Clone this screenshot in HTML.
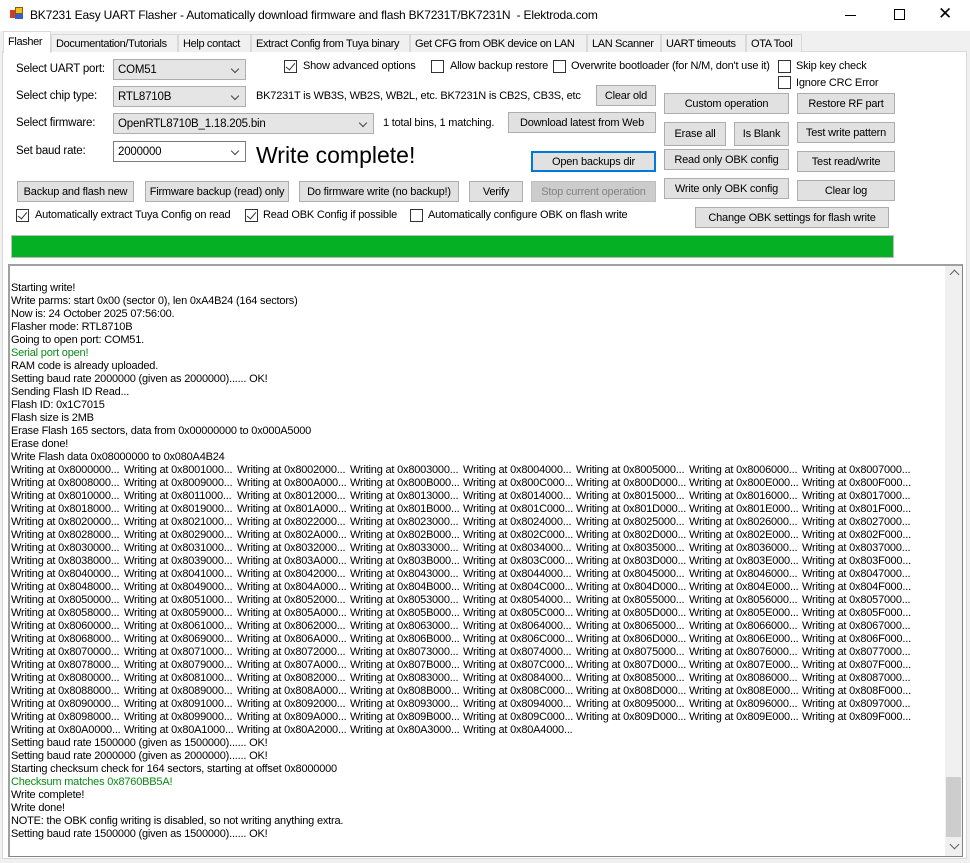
<!DOCTYPE html>
<html><head><meta charset="utf-8"><style>
*{box-sizing:border-box;margin:0;padding:0}
body{width:970px;height:863px;background:#f0f0f0;font-family:"Liberation Sans",sans-serif;font-size:11px;color:#000;position:relative;overflow:hidden;letter-spacing:-0.2px}
.a{position:absolute;white-space:nowrap}
.btn{position:absolute;background:#e1e1e1;border:1px solid #adadad;text-align:center;font-size:11px;display:flex;align-items:center;justify-content:center;white-space:nowrap}
.cb{position:absolute;width:13px;height:13px;border:1px solid #333;background:#fff}
.cb.on::after{content:"";position:absolute;left:3px;top:0px;width:4px;height:8px;border:solid #333;border-width:0 1.3px 1.3px 0;transform:rotate(40deg)}
.combo{position:absolute;background:#e5e5e5;border:1px solid #adadad;padding-left:4px;display:flex;align-items:center;font-size:11.5px}
.combo::after{content:"";position:absolute;right:7px;top:6px;width:5px;height:5px;border:solid #444;border-width:0 1px 1px 0;transform:rotate(45deg)}
.tab{position:absolute;top:34px;height:18px;border:1px solid #d9d9d9;border-bottom:none;background:#f0f0f0;padding:3px 0 0 4px;font-size:11px;white-space:nowrap;overflow:hidden;letter-spacing:-0.35px}
#log{position:absolute;left:8px;top:264px;width:955px;height:593px;background:#fff;border:1px solid #828282;border-top:2px solid #a0a0a0;border-left:2px solid #a0a0a0;overflow:hidden}
#lines{position:absolute;left:1px;top:16px;font-size:11px;line-height:13px;width:935px;overflow:hidden}
#lines div{height:13px;white-space:nowrap}
.r span{display:inline-block;width:113px;overflow:hidden;white-space:nowrap}
.g{color:#0a8a16}
.lb{font-size:11.5px}
</style></head><body>
<div class="a" style="left:0;top:0;width:970px;height:31px;background:#fff"></div>
<div class="a" style="left:10px;top:10px;width:6px;height:8px;background:#d04020"></div>
<div class="a" style="left:15px;top:7px;width:8px;height:7px;background:#f0c020;border:1px solid #806010"></div>
<div class="a" style="left:15px;top:14px;width:8px;height:5px;background:#3060d0"></div>
<div class="a" style="left:30px;top:8px;font-size:12px">BK7231 Easy UART Flasher - Automatically download firmware and flash BK7231T/BK7231N&nbsp; - Elektroda.com</div>
<div class="a" style="left:845px;top:15px;width:11px;height:1px;background:#000"></div>
<div class="a" style="left:894px;top:9px;width:11px;height:11px;border:1px solid #000"></div>
<div class="a" style="left:938px;top:4px;font-size:17px;font-weight:300">✕</div>

<div class="a" style="left:2px;top:51px;width:965px;height:808px;background:#fff;border:1px solid #d9d9d9"></div>
<div class="tab" style="left:51px;width:127px">Documentation/Tutorials</div>
<div class="tab" style="left:178px;width:73px">Help contact</div>
<div class="tab" style="left:251px;width:159px">Extract Config from Tuya binary</div>
<div class="tab" style="left:410px;width:177px">Get CFG from OBK device on LAN</div>
<div class="tab" style="left:587px;width:74px">LAN Scanner</div>
<div class="tab" style="left:661px;width:85px">UART timeouts</div>
<div class="tab" style="left:746px;width:56px">OTA Tool</div>
<div class="tab" style="left:3px;top:31px;height:22px;width:48px;background:#fff;padding-top:4px">Flasher</div>

<div class="a lb" style="left:16px;top:63px">Select UART port:</div>
<div class="combo" style="left:113px;top:59px;width:133px;height:21px">COM51</div>
<div class="a lb" style="left:16px;top:90px">Select chip type:</div>
<div class="combo" style="left:113px;top:86px;width:133px;height:21px">RTL8710B</div>
<div class="a lb" style="left:16px;top:117px">Select firmware:</div>
<div class="combo" style="left:113px;top:113px;width:261px;height:21px">OpenRTL8710B_1.18.205.bin</div>
<div class="a lb" style="left:16px;top:145px">Set baud rate:</div>
<div class="combo" style="left:113px;top:141px;width:133px;height:21px;background:#fff;border-color:#7a7a7a">2000000</div>
<div class="a" style="left:256px;top:142px;font-size:23px;letter-spacing:0">Write complete!</div>

<div class="cb on" style="left:284px;top:60px"></div><div class="a" style="left:303px;top:60px;line-height:13px">Show advanced options</div>
<div class="cb" style="left:431px;top:60px"></div><div class="a" style="left:450px;top:60px;line-height:13px">Allow backup restore</div>
<div class="cb" style="left:553px;top:60px"></div><div class="a" style="left:571px;top:60px;line-height:13px">Overwrite bootloader (for N/M, don't use it)</div>
<div class="cb" style="left:778px;top:60px"></div><div class="a" style="left:796px;top:60px;line-height:13px">Skip key check</div>
<div class="cb" style="left:778px;top:76px"></div><div class="a" style="left:796px;top:77px">Ignore CRC Error</div>

<div class="a" style="left:256px;top:90px;font-size:11px">BK7231T is WB3S, WB2S, WB2L, etc. BK7231N is CB2S, CB3S, etc</div>
<div class="btn" style="left:596px;top:85px;width:60px;height:21px">Clear old</div>
<div class="a" style="left:383px;top:117px">1 total bins, 1 matching.</div>
<div class="btn" style="left:508px;top:112px;width:148px;height:21px">Download latest from Web</div>
<div class="btn" style="left:531px;top:151px;width:125px;height:21px;border:2px solid #0078d7">Open backups dir</div>
<div class="btn" style="left:531px;top:181px;width:125px;height:21px;background:#ccc;border-color:#bfbfbf;color:#838383">Stop current operation</div>

<div class="btn" style="left:17px;top:181px;width:117px;height:21px">Backup and flash new</div>
<div class="btn" style="left:145px;top:181px;width:144px;height:21px">Firmware backup (read) only</div>
<div class="btn" style="left:299px;top:181px;width:160px;height:21px">Do firmware write (no backup!)</div>
<div class="btn" style="left:469px;top:181px;width:54px;height:21px">Verify</div>

<div class="btn" style="left:664px;top:93px;width:125px;height:21px">Custom operation</div>
<div class="btn" style="left:664px;top:122px;width:62px;height:24px">Erase all</div>
<div class="btn" style="left:734px;top:122px;width:55px;height:24px">Is Blank</div>
<div class="btn" style="left:664px;top:149px;width:125px;height:21px">Read only OBK config</div>
<div class="btn" style="left:664px;top:178px;width:125px;height:21px">Write only OBK config</div>
<div class="btn" style="left:797px;top:93px;width:98px;height:21px">Restore RF part</div>
<div class="btn" style="left:797px;top:122px;width:98px;height:21px">Test write pattern</div>
<div class="btn" style="left:797px;top:151px;width:98px;height:21px">Test read/write</div>
<div class="btn" style="left:797px;top:180px;width:98px;height:21px">Clear log</div>
<div class="btn" style="left:695px;top:207px;width:194px;height:21px">Change OBK settings for flash write</div>

<div class="cb on" style="left:16px;top:209px"></div><div class="a" style="left:35px;top:209px">Automatically extract Tuya Config on read</div>
<div class="cb on" style="left:245px;top:209px"></div><div class="a" style="left:263px;top:209px">Read OBK Config if possible</div>
<div class="cb" style="left:410px;top:209px"></div><div class="a" style="left:428px;top:209px">Automatically configure OBK on flash write</div>

<div class="a" style="left:11px;top:235px;width:883px;height:23px;background:#06b025;border:1px solid #bcbcbc"></div>

<div id="log">
<div class="a" style="right:0;top:0;width:17px;height:591px;background:#f0f0f0"></div>
<div class="a" style="right:4px;top:5px;width:7px;height:7px;border:solid #606060;border-width:1.5px 0 0 1.5px;transform:rotate(45deg)"></div>
<div class="a" style="right:1px;top:511px;width:15px;height:60px;background:#cdcdcd"></div>
<div class="a" style="right:4px;top:575px;width:7px;height:7px;border:solid #606060;border-width:0 1.5px 1.5px 0;transform:rotate(45deg)"></div>
<div id="lines">
<div>Starting write!</div>
<div>Write parms: start 0x00 (sector 0), len 0xA4B24 (164 sectors)</div>
<div>Now is: 24 October 2025 07:56:00.</div>
<div>Flasher mode: RTL8710B</div>
<div>Going to open port: COM51.</div>
<div class="g">Serial port open!</div>
<div>RAM code is already uploaded.</div>
<div>Setting baud rate 2000000 (given as 2000000)...... OK!</div>
<div>Sending Flash ID Read...</div>
<div>Flash ID: 0x1C7015</div>
<div>Flash size is 2MB</div>
<div>Erase Flash 165 sectors, data from 0x00000000 to 0x000A5000</div>
<div>Erase done!</div>
<div>Write Flash data 0x08000000 to 0x080A4B24</div>
<div class="r"><span>Writing at 0x8000000...</span><span>Writing at 0x8001000...</span><span>Writing at 0x8002000...</span><span>Writing at 0x8003000...</span><span>Writing at 0x8004000...</span><span>Writing at 0x8005000...</span><span>Writing at 0x8006000...</span><span>Writing at 0x8007000...</span></div>
<div class="r"><span>Writing at 0x8008000...</span><span>Writing at 0x8009000...</span><span>Writing at 0x800A000...</span><span>Writing at 0x800B000...</span><span>Writing at 0x800C000...</span><span>Writing at 0x800D000...</span><span>Writing at 0x800E000...</span><span>Writing at 0x800F000...</span></div>
<div class="r"><span>Writing at 0x8010000...</span><span>Writing at 0x8011000...</span><span>Writing at 0x8012000...</span><span>Writing at 0x8013000...</span><span>Writing at 0x8014000...</span><span>Writing at 0x8015000...</span><span>Writing at 0x8016000...</span><span>Writing at 0x8017000...</span></div>
<div class="r"><span>Writing at 0x8018000...</span><span>Writing at 0x8019000...</span><span>Writing at 0x801A000...</span><span>Writing at 0x801B000...</span><span>Writing at 0x801C000...</span><span>Writing at 0x801D000...</span><span>Writing at 0x801E000...</span><span>Writing at 0x801F000...</span></div>
<div class="r"><span>Writing at 0x8020000...</span><span>Writing at 0x8021000...</span><span>Writing at 0x8022000...</span><span>Writing at 0x8023000...</span><span>Writing at 0x8024000...</span><span>Writing at 0x8025000...</span><span>Writing at 0x8026000...</span><span>Writing at 0x8027000...</span></div>
<div class="r"><span>Writing at 0x8028000...</span><span>Writing at 0x8029000...</span><span>Writing at 0x802A000...</span><span>Writing at 0x802B000...</span><span>Writing at 0x802C000...</span><span>Writing at 0x802D000...</span><span>Writing at 0x802E000...</span><span>Writing at 0x802F000...</span></div>
<div class="r"><span>Writing at 0x8030000...</span><span>Writing at 0x8031000...</span><span>Writing at 0x8032000...</span><span>Writing at 0x8033000...</span><span>Writing at 0x8034000...</span><span>Writing at 0x8035000...</span><span>Writing at 0x8036000...</span><span>Writing at 0x8037000...</span></div>
<div class="r"><span>Writing at 0x8038000...</span><span>Writing at 0x8039000...</span><span>Writing at 0x803A000...</span><span>Writing at 0x803B000...</span><span>Writing at 0x803C000...</span><span>Writing at 0x803D000...</span><span>Writing at 0x803E000...</span><span>Writing at 0x803F000...</span></div>
<div class="r"><span>Writing at 0x8040000...</span><span>Writing at 0x8041000...</span><span>Writing at 0x8042000...</span><span>Writing at 0x8043000...</span><span>Writing at 0x8044000...</span><span>Writing at 0x8045000...</span><span>Writing at 0x8046000...</span><span>Writing at 0x8047000...</span></div>
<div class="r"><span>Writing at 0x8048000...</span><span>Writing at 0x8049000...</span><span>Writing at 0x804A000...</span><span>Writing at 0x804B000...</span><span>Writing at 0x804C000...</span><span>Writing at 0x804D000...</span><span>Writing at 0x804E000...</span><span>Writing at 0x804F000...</span></div>
<div class="r"><span>Writing at 0x8050000...</span><span>Writing at 0x8051000...</span><span>Writing at 0x8052000...</span><span>Writing at 0x8053000...</span><span>Writing at 0x8054000...</span><span>Writing at 0x8055000...</span><span>Writing at 0x8056000...</span><span>Writing at 0x8057000...</span></div>
<div class="r"><span>Writing at 0x8058000...</span><span>Writing at 0x8059000...</span><span>Writing at 0x805A000...</span><span>Writing at 0x805B000...</span><span>Writing at 0x805C000...</span><span>Writing at 0x805D000...</span><span>Writing at 0x805E000...</span><span>Writing at 0x805F000...</span></div>
<div class="r"><span>Writing at 0x8060000...</span><span>Writing at 0x8061000...</span><span>Writing at 0x8062000...</span><span>Writing at 0x8063000...</span><span>Writing at 0x8064000...</span><span>Writing at 0x8065000...</span><span>Writing at 0x8066000...</span><span>Writing at 0x8067000...</span></div>
<div class="r"><span>Writing at 0x8068000...</span><span>Writing at 0x8069000...</span><span>Writing at 0x806A000...</span><span>Writing at 0x806B000...</span><span>Writing at 0x806C000...</span><span>Writing at 0x806D000...</span><span>Writing at 0x806E000...</span><span>Writing at 0x806F000...</span></div>
<div class="r"><span>Writing at 0x8070000...</span><span>Writing at 0x8071000...</span><span>Writing at 0x8072000...</span><span>Writing at 0x8073000...</span><span>Writing at 0x8074000...</span><span>Writing at 0x8075000...</span><span>Writing at 0x8076000...</span><span>Writing at 0x8077000...</span></div>
<div class="r"><span>Writing at 0x8078000...</span><span>Writing at 0x8079000...</span><span>Writing at 0x807A000...</span><span>Writing at 0x807B000...</span><span>Writing at 0x807C000...</span><span>Writing at 0x807D000...</span><span>Writing at 0x807E000...</span><span>Writing at 0x807F000...</span></div>
<div class="r"><span>Writing at 0x8080000...</span><span>Writing at 0x8081000...</span><span>Writing at 0x8082000...</span><span>Writing at 0x8083000...</span><span>Writing at 0x8084000...</span><span>Writing at 0x8085000...</span><span>Writing at 0x8086000...</span><span>Writing at 0x8087000...</span></div>
<div class="r"><span>Writing at 0x8088000...</span><span>Writing at 0x8089000...</span><span>Writing at 0x808A000...</span><span>Writing at 0x808B000...</span><span>Writing at 0x808C000...</span><span>Writing at 0x808D000...</span><span>Writing at 0x808E000...</span><span>Writing at 0x808F000...</span></div>
<div class="r"><span>Writing at 0x8090000...</span><span>Writing at 0x8091000...</span><span>Writing at 0x8092000...</span><span>Writing at 0x8093000...</span><span>Writing at 0x8094000...</span><span>Writing at 0x8095000...</span><span>Writing at 0x8096000...</span><span>Writing at 0x8097000...</span></div>
<div class="r"><span>Writing at 0x8098000...</span><span>Writing at 0x8099000...</span><span>Writing at 0x809A000...</span><span>Writing at 0x809B000...</span><span>Writing at 0x809C000...</span><span>Writing at 0x809D000...</span><span>Writing at 0x809E000...</span><span>Writing at 0x809F000...</span></div>
<div class="r"><span>Writing at 0x80A0000...</span><span>Writing at 0x80A1000...</span><span>Writing at 0x80A2000...</span><span>Writing at 0x80A3000...</span><span>Writing at 0x80A4000...</span></div>
<div>Setting baud rate 1500000 (given as 1500000)...... OK!</div>
<div>Setting baud rate 2000000 (given as 2000000)...... OK!</div>
<div>Starting checksum check for 164 sectors, starting at offset 0x8000000</div>
<div class="g">Checksum matches 0x8760BB5A!</div>
<div>Write complete!</div>
<div>Write done!</div>
<div>NOTE: the OBK config writing is disabled, so not writing anything extra.</div>
<div>Setting baud rate 1500000 (given as 1500000)...... OK!</div>
</div>
</div>
</body></html>
